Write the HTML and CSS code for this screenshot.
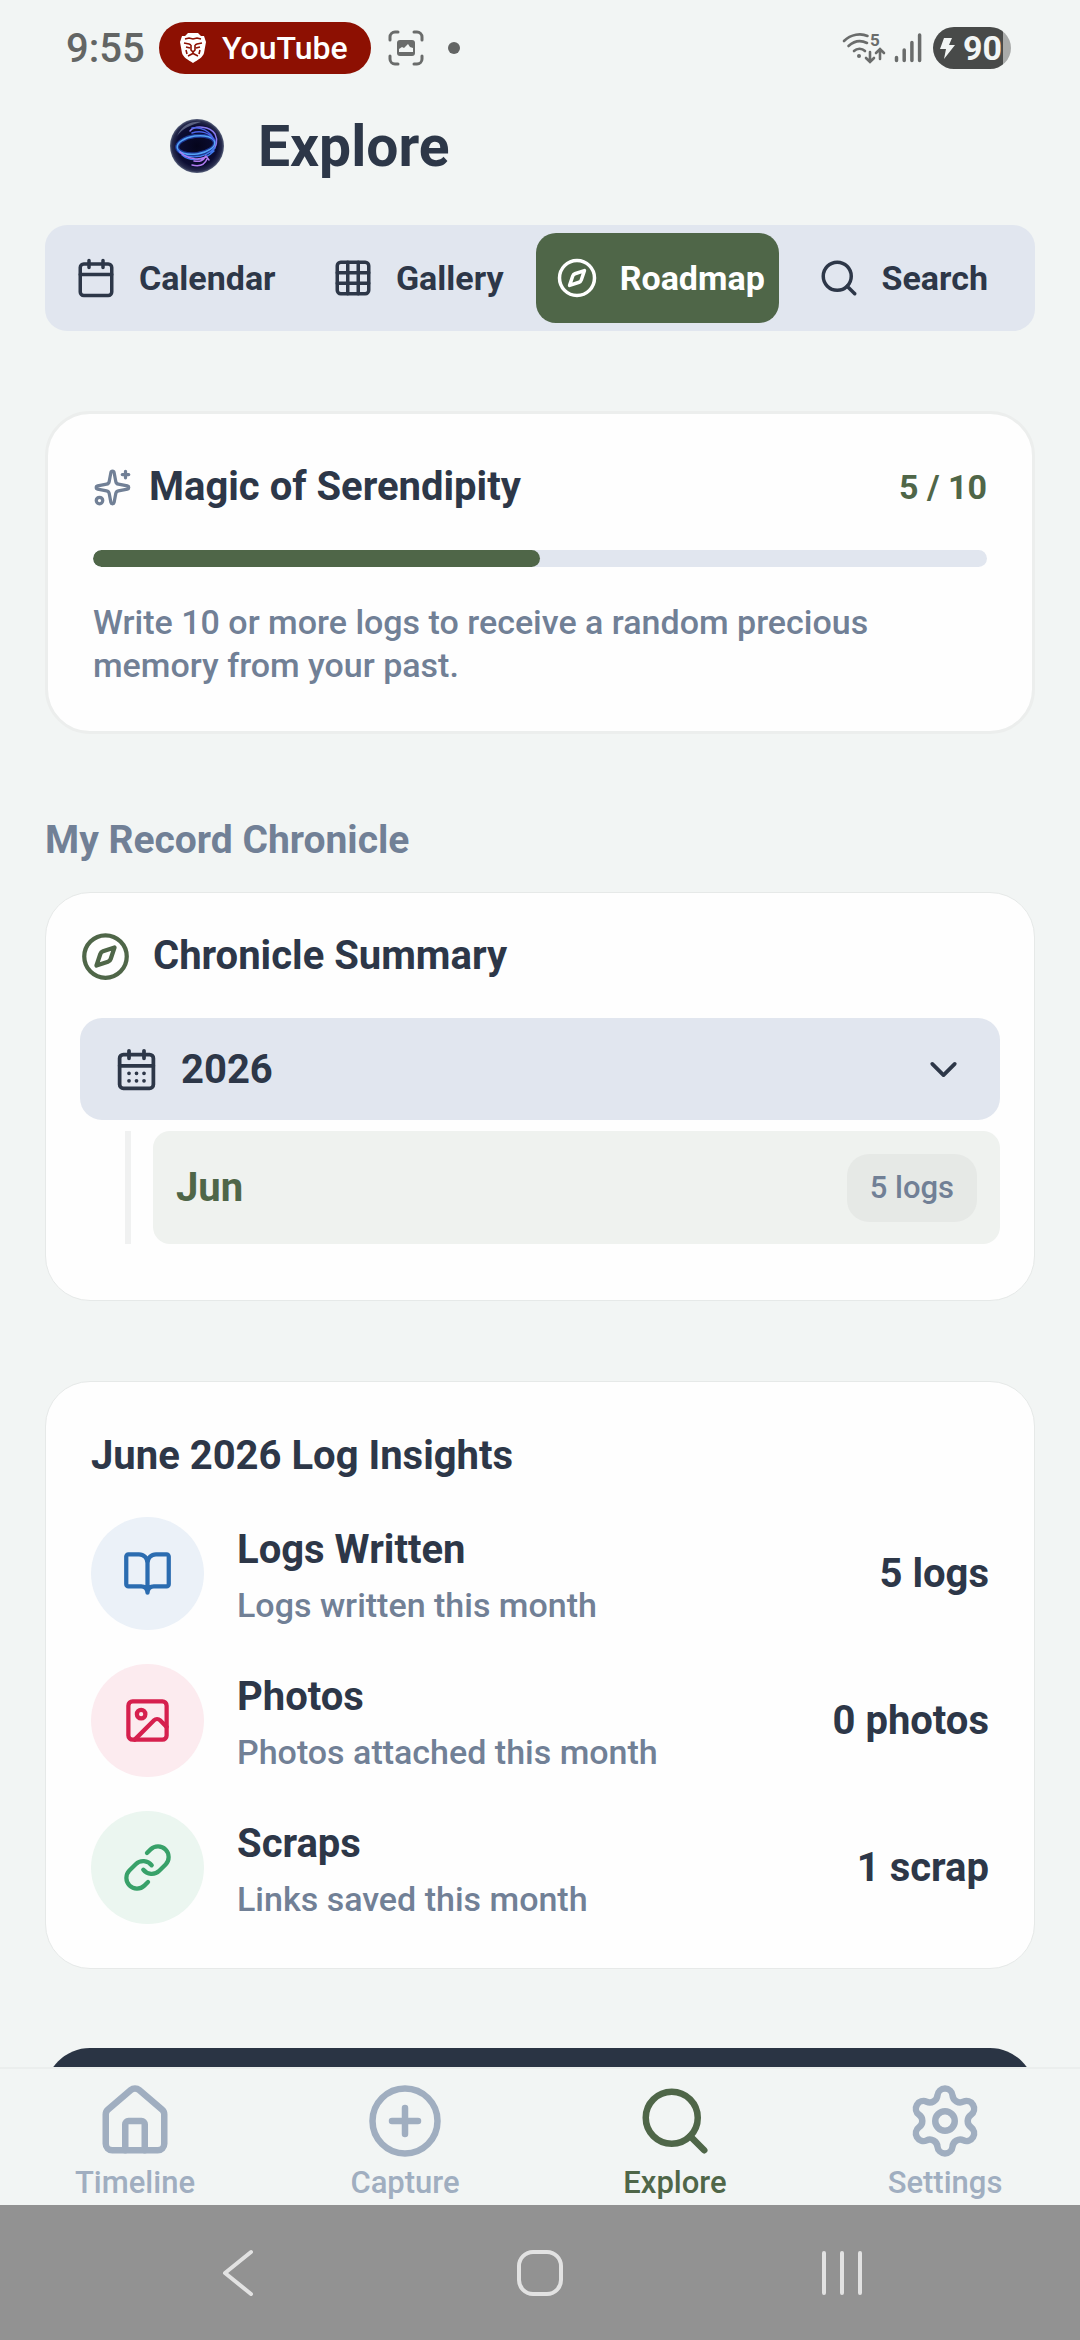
FILE: index.html
```html
<!DOCTYPE html>
<html lang="en">
<head>
    <meta charset="UTF-8">
    <meta name="viewport" content="width=device-width, initial-scale=1.0">
    <title>Explore</title>
    <link rel="stylesheet" href="styles.css">
</head>
<body>
    <div class="status-bar">
        <div class="status-left">
            <span class="clock">9:55</span>
            <span class="app-pill">
                <svg class="lion" viewBox="0 0 26 30">
                    <path fill="#fff" d="M8 0h10l3 3 3 0 2 6-2 11c-1 4-6 7-11 10C8 27 3 24 2 20L0 9l2-6h3z"/>
                    <path fill="none" stroke="#8d1002" stroke-width="1.6" d="M5 6l4-1 4 1 4-1 4 1M4 10l5 1 2 1M22 10l-5 1-2 1M6 14l4 1M20 14l-4 1M11 12v5l2 2 2-2v-5M13 19v2M8 23l5-2.500 5 2.500M6 17l1 4M20 17l-1 4"/>
                </svg>
                YouTube
            </span>
            <svg class="shot-icon" viewBox="0 0 36 36">
                <path fill="none" stroke="#6a6c6b" stroke-width="3" stroke-linecap="round" d="M2 10V7a5 5 0 0 1 5-5h3M26 2h3a5 5 0 0 1 5 5v3M34 26v3a5 5 0 0 1-5 5h-3M10 34H7a5 5 0 0 1-5-5v-3"/>
                <rect x="9" y="10" width="18" height="16" rx="3" fill="#6a6c6b"/>
                <path fill="#f2f5f4" d="M11 22v-3l3-2 2 1 4-4 2 3 3 1v4z"/>
            </svg>
            <span class="dot"></span>
        </div>
        <div class="status-right">
            <svg class="wifi-icon" viewBox="0 0 44 40">
                <g fill="none" stroke="#6a6c6b" stroke-width="2.600" stroke-linecap="round">
                    <path d="M2 13C9 6 19 5 25.500 8M6.500 18C12 13 19 12 25 15M12 23c3-3 8-3 11 0"/>
                    <path d="M28 24v9M24 30l4 4 4-4M38 31v-9M34 25l4-4 4 4"/>
                </g>
                <circle cx="17" cy="28" r="2" fill="#6a6c6b"/>
                <text class="wifi-band" x="28" y="18">5</text>
            </svg>
            <svg class="signal-icon" viewBox="0 0 28 30">
                <path fill="none" stroke="#6a6c6b" stroke-width="3.500" stroke-linecap="round" d="M2.500 24.500v3M10.200 17v10.500M17.900 9.500v18M25.600 2v25.500"/>
            </svg>
            <span class="battery">
                <svg class="bolt" viewBox="0 0 15 22"><path fill="#f2f5f4" d="M4 1h8L9 8h6L4 22l2-10H0z"/></svg>
                90
            </span>
        </div>
    </div>

    <header class="header">
        <svg class="logo" viewBox="0 0 54 54">
            <defs>
                <radialGradient id="orb" cx="50%" cy="50%" r="50%">
                    <stop offset="0%" stop-color="#05051c"/>
                    <stop offset="75%" stop-color="#0c0d33"/>
                    <stop offset="92%" stop-color="#272b4d"/>
                    <stop offset="100%" stop-color="#59627c"/>
                </radialGradient>
            </defs>
            <circle cx="27" cy="27" r="27" fill="url(#orb)"/>
            <path fill="#9aa6bd" opacity=".5" d="M7 17C12 6 22 2 31 3 20 6 12 10 7 17z"/>
            <g fill="none" stroke-linecap="round">
                <ellipse cx="26" cy="26" rx="19" ry="9" stroke="#2a55d8" stroke-width="4" opacity=".6" transform="rotate(-8 26 26)"/>
                <ellipse cx="26" cy="26" rx="19" ry="9" stroke="#55a4f5" stroke-width="1.500" transform="rotate(-8 26 26)"/>
                <path stroke="#8b7cf0" stroke-width="1.500" d="M20 12c5-6 20-5 25 3 3 6 2 13-4 18"/>
                <path stroke="#4b63e8" stroke-width="1.500" d="M22 9c8-1 18 2 22 12M22 14c9-3 18 0 21 6"/>
                <path stroke="#3f7bf0" stroke-width="1.500" d="M8 31c5 9 26 10 37-2M12 36c8 7 22 6 32-4"/>
                <path stroke="#b07bf0" stroke-width="1.500" d="M10 33c8 8 20 8 26 5M22 46c8 2 13-1 15-6M24 42c6 1 9 0 12-5l3 4"/>
            </g>
        </svg>
        <h1 class="title">Explore</h1>
    </header>

    <main class="content">
        <div class="tabs">
            <button class="tab">
                <svg class="icon icon-tab" viewBox="0 0 24 24"><path d="M8 2v4M16 2v4M3 10h18"/><rect x="3" y="4" width="18" height="18" rx="2"/></svg>
                Calendar
            </button>
            <button class="tab">
                <svg class="icon icon-tab" viewBox="0 0 24 24"><rect x="3" y="3" width="18" height="18" rx="2"/><path d="M3 9h18M3 15h18M9 3v18M15 3v18"/></svg>
                Gallery
            </button>
            <button class="tab active">
                <svg class="icon icon-tab" viewBox="0 0 24 24"><path d="m16.240 7.760-1.804 5.411a2 2 0 0 1-1.265 1.265L7.760 16.240l1.804-5.411a2 2 0 0 1 1.265-1.265z"/><circle cx="12" cy="12" r="10"/></svg>
                Roadmap
            </button>
            <button class="tab">
                <svg class="icon icon-tab" viewBox="0 0 24 24"><path d="m21 21-4.340-4.340"/><circle cx="11" cy="11" r="8"/></svg>
                Search
            </button>
        </div>

        <section class="card magic">
            <div class="magic-head">
                <svg class="icon icon-sparkle" viewBox="0 0 24 24"><path d="M11.017 2.814a1 1 0 0 1 1.966 0l1.051 5.558a2 2 0 0 0 1.594 1.594l5.558 1.051a1 1 0 0 1 0 1.966l-5.558 1.051a2 2 0 0 0-1.594 1.594l-1.051 5.558a1 1 0 0 1-1.966 0l-1.051-5.558a2 2 0 0 0-1.594-1.594l-5.558-1.051a1 1 0 0 1 0-1.966l5.558-1.051a2 2 0 0 0 1.594-1.594zM20 2v4M22 4h-4"/><circle cx="4" cy="20" r="2"/></svg>
                <h2 class="card-title" id="magicTitle">Magic of Serendipity</h2>
                <span class="count">5 / 10</span>
            </div>
            <progress class="progress" value="5" max="10" aria-labelledby="magicTitle"></progress>
            <p class="sub-text">Write 10 or more logs to receive a random precious memory from your past.</p>
        </section>

        <h2 class="section-title">My Record Chronicle</h2>

        <section class="card chronicle">
            <div class="chronicle-head">
                <svg class="icon icon-large" viewBox="0 0 24 24"><path d="m16.240 7.760-1.804 5.411a2 2 0 0 1-1.265 1.265L7.760 16.240l1.804-5.411a2 2 0 0 1 1.265-1.265z"/><circle cx="12" cy="12" r="10"/></svg>
                <h3 class="card-title">Chronicle Summary</h3>
            </div>
            <button class="year" aria-expanded="true">
                <svg class="icon icon-year" viewBox="0 0 24 24"><path d="M8 2v4M16 2v4M3 10h18M8 14h.01M12 14h.01M16 14h.01M8 18h.01M12 18h.01M16 18h.01"/><rect x="3" y="4" width="18" height="18" rx="2"/></svg>
                <span>2026</span>
                <svg class="icon icon-year chevron" viewBox="0 0 24 24"><path d="m6 9 6 6 6-6"/></svg>
            </button>
            <div class="months">
                <button class="month">
                    <span>Jun</span>
                    <span class="badge">5 logs</span>
                </button>
            </div>
        </section>

        <section class="card insights">
            <h3 class="card-title">June 2026 Log Insights</h3>
            <ul class="insight-list">
                <li class="insight">
                    <span class="circle blue">
                        <svg class="icon icon-large" viewBox="0 0 24 24"><path d="M12 7v14M3 18a1 1 0 0 1-1-1V4a1 1 0 0 1 1-1h5a4 4 0 0 1 4 4 4 4 0 0 1 4-4h5a1 1 0 0 1 1 1v13a1 1 0 0 1-1 1h-6a3 3 0 0 0-3 3 3 3 0 0 0-3-3z"/></svg>
                    </span>
                    <div class="insight-text">
                        <h4 class="card-title">Logs Written</h4>
                        <p class="sub-text">Logs written this month</p>
                    </div>
                    <strong class="value">5 logs</strong>
                </li>
                <li class="insight">
                    <span class="circle red">
                        <svg class="icon icon-large" viewBox="0 0 24 24"><rect x="3" y="3" width="18" height="18" rx="2"/><circle cx="9" cy="9" r="2"/><path d="m21 15-3.086-3.086a2 2 0 0 0-2.828 0L6 21"/></svg>
                    </span>
                    <div class="insight-text">
                        <h4 class="card-title">Photos</h4>
                        <p class="sub-text">Photos attached this month</p>
                    </div>
                    <strong class="value">0 photos</strong>
                </li>
                <li class="insight">
                    <span class="circle green">
                        <svg class="icon icon-large" viewBox="0 0 24 24"><path d="M10 13a5 5 0 0 0 7.540.540l3-3a5 5 0 0 0-7.070-7.070l-1.720 1.710M14 11a5 5 0 0 0-7.540-.540l-3 3a5 5 0 0 0 7.070 7.070l1.710-1.710"/></svg>
                    </span>
                    <div class="insight-text">
                        <h4 class="card-title">Scraps</h4>
                        <p class="sub-text">Links saved this month</p>
                    </div>
                    <strong class="value">1 scrap</strong>
                </li>
            </ul>
        </section>

        <section class="dark-card"></section>
    </main>

    <nav class="bottom-nav">
        <a class="nav-item" href="#timeline">
            <svg class="icon icon-nav" viewBox="0 0 24 24"><path d="M15 21v-8a1 1 0 0 0-1-1h-4a1 1 0 0 0-1 1v8"/><path d="M3 10a2 2 0 0 1 .709-1.528l7-6a2 2 0 0 1 2.582 0l7 6A2 2 0 0 1 21 10v9a2 2 0 0 1-2 2H5a2 2 0 0 1-2-2z"/></svg>
            Timeline
        </a>
        <a class="nav-item" href="#capture">
            <svg class="icon icon-nav" viewBox="0 0 24 24"><circle cx="12" cy="12" r="10"/><path d="M8 12h8M12 8v8"/></svg>
            Capture
        </a>
        <a class="nav-item active" href="#explore">
            <svg class="icon icon-nav" viewBox="0 0 24 24"><path d="m21 21-4.340-4.340"/><circle cx="11" cy="11" r="8"/></svg>
            Explore
        </a>
        <a class="nav-item" href="#settings">
            <svg class="icon icon-nav" viewBox="0 0 24 24"><path d="M9.671 4.136a2.340 2.340 0 0 1 4.659 0 2.340 2.340 0 0 0 3.319 1.915 2.340 2.340 0 0 1 2.330 4.033 2.340 2.340 0 0 0 0 3.831 2.340 2.340 0 0 1-2.330 4.033 2.340 2.340 0 0 0-3.319 1.915 2.340 2.340 0 0 1-4.659 0 2.340 2.340 0 0 0-3.320-1.915 2.340 2.340 0 0 1-2.330-4.033 2.340 2.340 0 0 0 0-3.831A2.340 2.340 0 0 1 6.350 6.051a2.340 2.340 0 0 0 3.319-1.915"/><circle cx="12" cy="12" r="3"/></svg>
            Settings
        </a>
    </nav>

    <div class="system-bar">
        <button class="sys-btn" aria-label="Back">
            <svg class="sys-icon" viewBox="0 0 48 48"><path d="M37 3 11 24l26 21"/></svg>
        </button>
        <button class="sys-btn" aria-label="Home">
            <svg class="sys-icon" viewBox="0 0 48 48"><rect x="3" y="3" width="42" height="42" rx="14"/></svg>
        </button>
        <button class="sys-btn" aria-label="Recents">
            <svg class="sys-icon" viewBox="0 0 48 48"><path d="M6 4v40M24 4v40M42 4v40"/></svg>
        </button>
    </div>
</body>
</html>
```
FILE: styles.css
```css
* {
    box-sizing: border-box;
}

body {
    margin: 0;
    height: 100vh;
    display: flex;
    flex-direction: column;
    font-family: Roboto, "Liberation Sans", sans-serif;
    font-weight: 500;
    background: #f2f5f4;
    color: #2d3748;
}

h1, h2, h3, h4, p, ul {
    margin: 0;
    padding: 0;
}

button {
    border: none;
    background: none;
    font-family: inherit;
    color: inherit;
    cursor: pointer;
}

.icon {
    flex: none;
    fill: none;
    stroke: currentColor;
    stroke-width: 2;
    stroke-linecap: round;
    stroke-linejoin: round;
}

.icon-sparkle { width: 39px; height: 39px; color: #718096; }
.icon-tab { width: 42px; height: 42px; }
.icon-year { width: 45px; height: 45px; }
.icon-large { width: 51px; height: 51px; }
.icon-nav { width: 78px; height: 78px; }

/* status bar */
.status-bar {
    flex: none;
    display: flex;
    justify-content: space-between;
    height: 96px;
    padding: 0 69px 0 66px;
}

.status-left,
.status-right {
    display: flex;
    align-items: center;
}

.clock {
    width: 93px;
    font-size: 40px;
    color: #636564;
}

.app-pill {
    display: flex;
    align-items: center;
    gap: 16px;
    height: 52px;
    padding: 0 23px 0 21px;
    border-radius: 26px;
    background: #8d1002;
    color: #fff;
    font-size: 32px;
}

.lion { width: 26px; height: 30px; }
.shot-icon { width: 36px; height: 36px; margin: 0 24px 0 17px; }

.dot {
    width: 12px;
    height: 12px;
    border-radius: 50%;
    background: #636564;
}

.wifi-icon { width: 44px; height: 40px; margin-right: 8px; }
.signal-icon { width: 28px; height: 30px; margin-right: 11px; }

.wifi-band {
    font-size: 17px;
    font-weight: 700;
    fill: #6a6c6b;
}

.battery {
    display: flex;
    align-items: center;
    gap: 8px;
    width: 78px;
    height: 42px;
    padding-left: 7px;
    border-radius: 21px;
    background: linear-gradient(90deg, #484a49 90%, #a9abaa 90%);
    color: #f2f5f4;
    font-size: 34px;
    font-weight: 700;
}

.bolt { width: 15px; height: 22px; }

/* header */
.header {
    flex: none;
    display: flex;
    align-items: center;
    gap: 34px;
    height: 100px;
    padding-left: 170px;
}

.logo { width: 54px; height: 54px; }

.title {
    font-size: 57px;
    font-weight: 700;
}

.content {
    flex: 1;
    min-height: 0;
    overflow: hidden;
    padding: 29px 45px 0;
}

/* tabs */
.tabs {
    display: grid;
    grid-template-columns: repeat(4, 1fr);
    padding: 8px 14px 8px 6px;
    border-radius: 22px;
    background: #e1e6ef;
}

.tab {
    display: flex;
    align-items: center;
    justify-content: center;
    gap: 22px;
    height: 90px;
    padding: 0 0 0 6px;
    border-radius: 20px;
    font-size: 34px;
    font-weight: 700;
}

.tab.active {
    background: #4f6648;
    color: #fff;
}

/* cards */
.card {
    border: 1px solid #e6e9e8;
    border-radius: 45px;
    background: #fefefe;
}

.card-title,
.section-title {
    font-size: 40px;
    font-weight: 700;
    line-height: 58px;
}

.section-title {
    margin: 77px 0 23px;
    font-size: 39px;
    color: #718096;
}

.sub-text {
    font-size: 34px;
    line-height: 43px;
    color: #718096;
}

.magic {
    margin-top: 80px;
    padding: 44px 45px;
    border-width: 3px;
    border-color: #eceeed;
}

.magic-head {
    display: flex;
    align-items: center;
    gap: 17px;
}

.count {
    margin-left: auto;
    font-size: 34px;
    font-weight: 700;
    color: #4f6648;
}

.progress {
    display: block;
    width: 100%;
    height: 17px;
    margin: 34px 0;
    border: none;
    border-radius: 9px;
    overflow: hidden;
    background: #e1e6ef;
    appearance: none;
}

.progress::-webkit-progress-bar {
    background: #e1e6ef;
}

.progress::-webkit-progress-value {
    border-radius: 9px;
    background: #4f6648;
}

/* chronicle */
.chronicle {
    padding: 34px 34px 56px;
}

.chronicle-head {
    display: flex;
    align-items: center;
    gap: 22px;
    margin-bottom: 33px;
}

.chronicle-head .icon {
    color: #4f6648;
}

.year {
    display: flex;
    align-items: center;
    gap: 22px;
    width: 100%;
    height: 102px;
    padding: 0 34px;
    border-radius: 22px;
    background: #e1e6ef;
    font-size: 40px;
    font-weight: 700;
}

.chevron {
    margin-left: auto;
}

.months {
    margin: 11px 0 0 45px;
    padding-left: 22px;
    border-left: 6px solid #f0f1f1;
}

.month {
    display: flex;
    align-items: center;
    justify-content: space-between;
    width: 100%;
    height: 113px;
    padding: 0 23px;
    border-radius: 17px;
    background: #eff2ef;
    color: #4f6648;
    font-size: 40px;
    font-weight: 700;
}

.badge {
    padding: 0 23px;
    border-radius: 22px;
    background: #e6e9e6;
    color: #718096;
    font-size: 31px;
    font-weight: 500;
    line-height: 68px;
}

/* insights */
.insights {
    margin-top: 80px;
    padding: 45px 45px 44px;
}

.insight-list {
    display: grid;
    gap: 34px;
    margin-top: 32px;
    list-style: none;
}

.insight {
    display: flex;
    align-items: center;
    gap: 33px;
}

.circle {
    display: flex;
    align-items: center;
    justify-content: center;
    width: 113px;
    height: 113px;
    border-radius: 50%;
}

.blue { background: #ebf1f8; color: #2b6cb0; }
.red { background: #fcebef; color: #d6204e; }
.green { background: #ebf6f0; color: #38a169; }

.insight-text {
    flex: 1;
    display: grid;
    gap: 5px;
}

.value {
    font-size: 40px;
    font-weight: 700;
}

.dark-card {
    height: 300px;
    margin-top: 79px;
    border-radius: 45px;
    background: #2a3444;
}

/* bottom nav */
.bottom-nav {
    flex: none;
    display: grid;
    grid-template-columns: repeat(4, 1fr);
    padding: 13px 0 4px;
    border-top: 2px solid #ebeeed;
    background: #f2f5f4;
}

.nav-item {
    display: flex;
    flex-direction: column;
    align-items: center;
    gap: 5px;
    color: #a0aec0;
    font-size: 31px;
    line-height: 36px;
    text-decoration: none;
}

.nav-item.active {
    color: #4f6648;
}

.system-bar {
    flex: none;
    display: flex;
    justify-content: center;
    gap: 254px;
    height: 135px;
    background: #929292;
}

.sys-btn {
    padding: 0;
}

.sys-icon {
    display: block;
    width: 48px;
    height: 48px;
    fill: none;
    stroke: #e2e2e2;
    stroke-width: 4;
    stroke-linecap: round;
    stroke-linejoin: round;
}
```
